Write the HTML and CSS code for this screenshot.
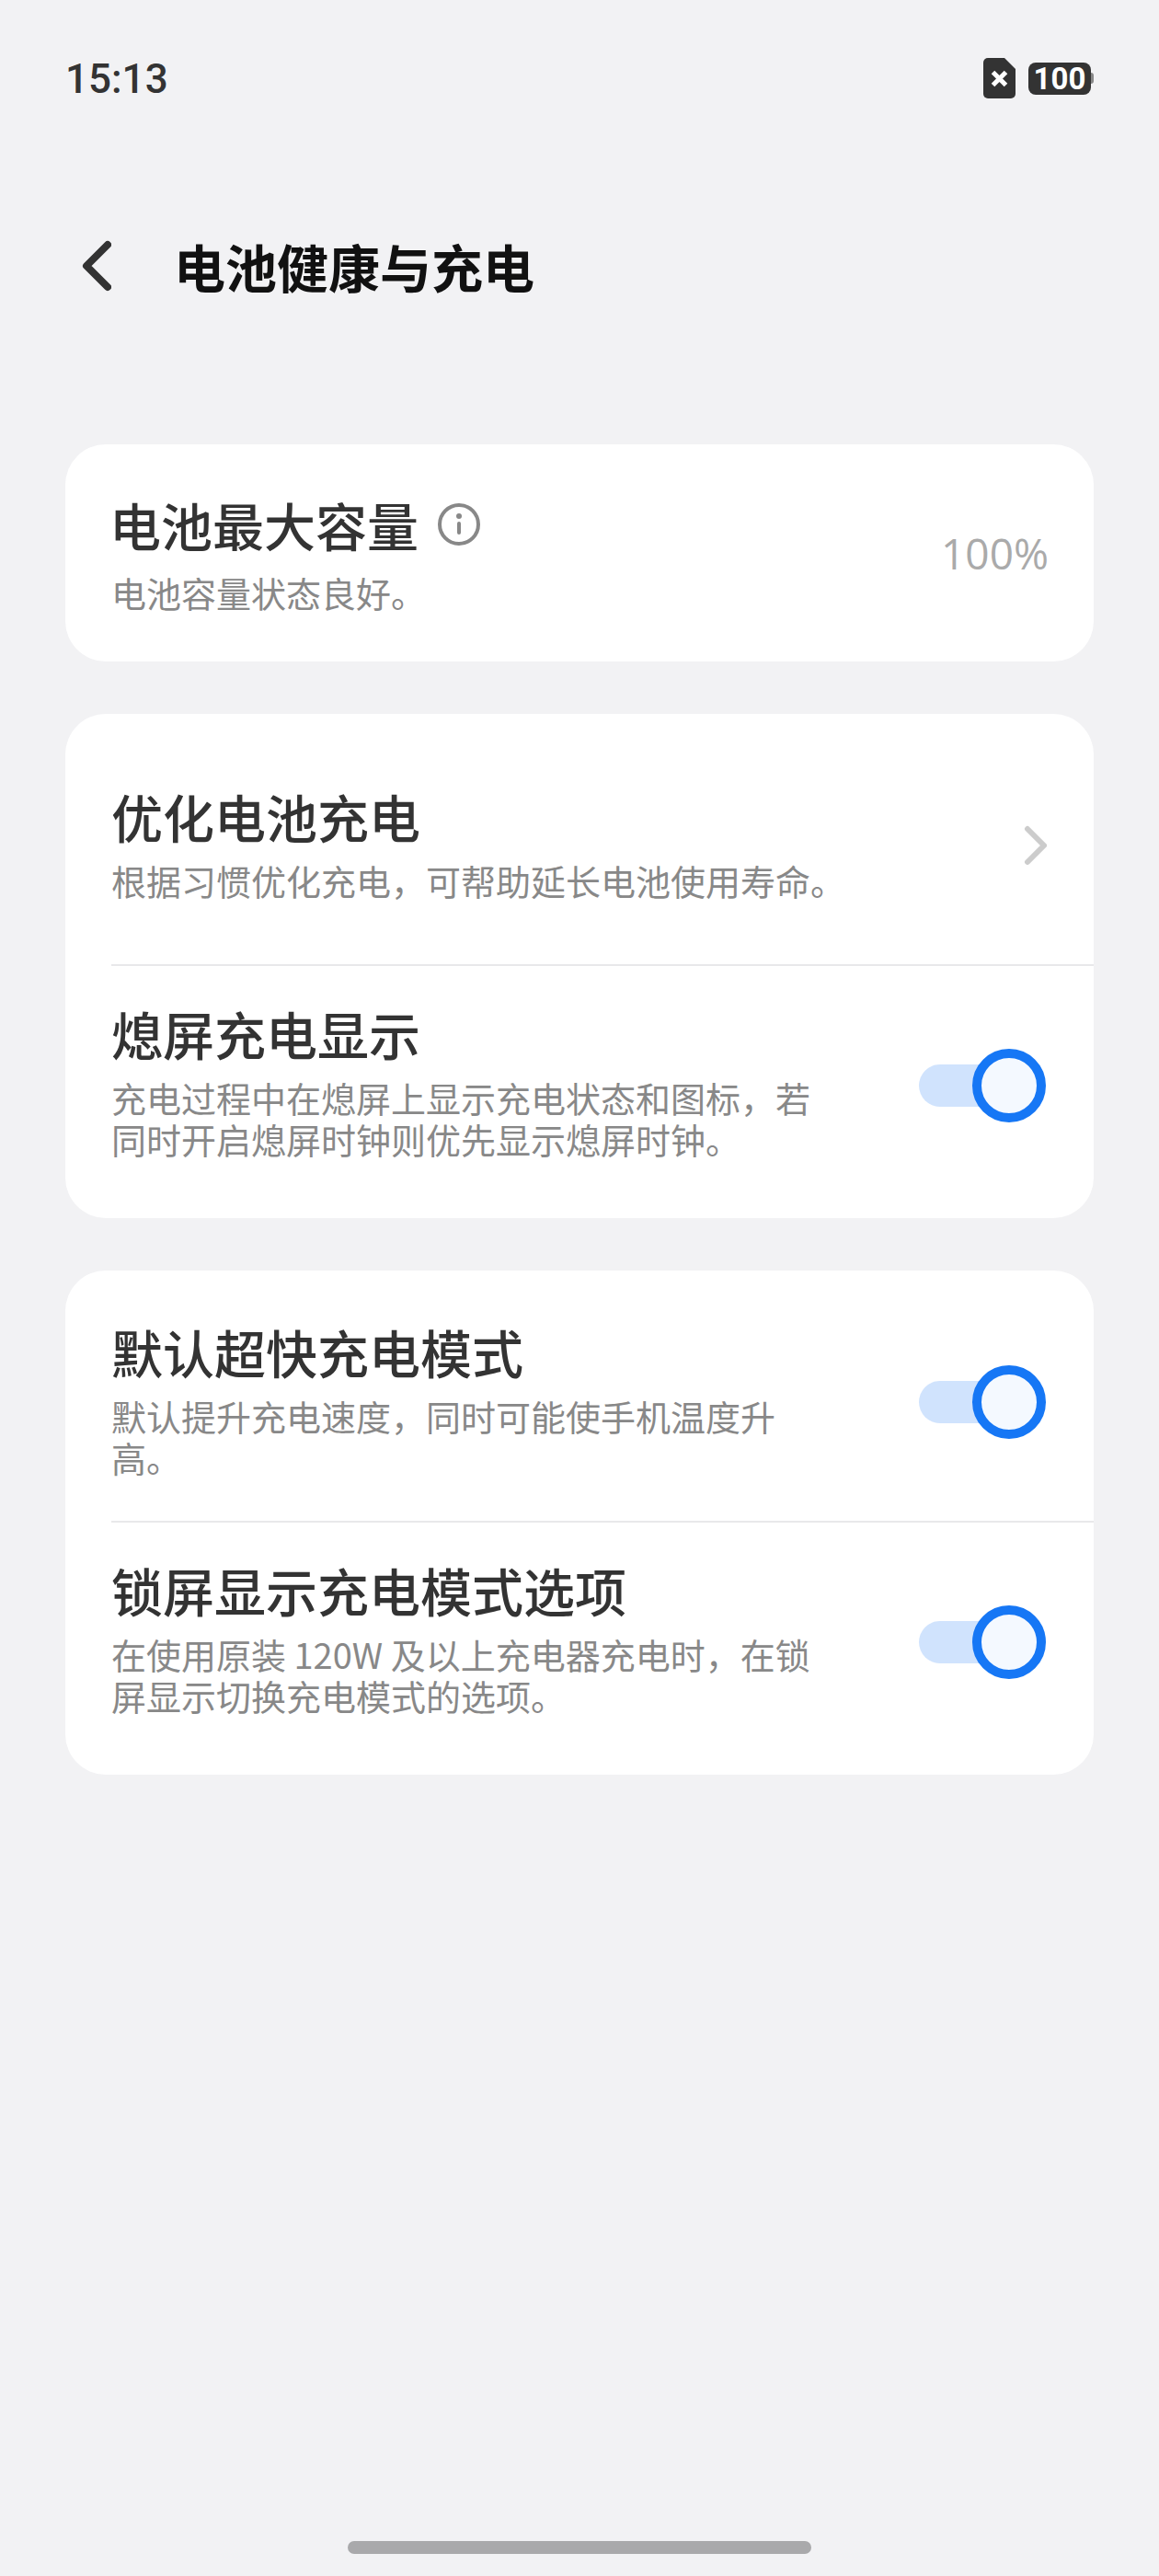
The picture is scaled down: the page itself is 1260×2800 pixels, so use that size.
FILE: index.html
```html
<!DOCTYPE html>
<html lang="zh-CN">
<head>
<meta charset="utf-8">
<title>电池健康与充电</title>
<link rel="stylesheet" href="styles.css">
</head>
<body>
<div class="page">
  <div class="status">
    <span class="time">15:13</span>
    <div class="status-icons">
      <svg class="sim" width="35" height="44" viewBox="0 0 35 44"><path d="M5 0H23L35 12V39a5 5 0 0 1-5 5H5a5 5 0 0 1-5-5V5a5 5 0 0 1 5-5Z" fill="#333"/><path d="M10.500 15.500L24.500 29.500M24.500 15.500L10.500 29.500" stroke="#fff" stroke-width="5" fill="none"/></svg>
      <div class="battery"><span class="battery-body">100</span><span class="battery-cap"></span></div>
    </div>
  </div>
  <div class="header">
    <svg class="back" width="34" height="56" viewBox="0 0 34 56"><path d="M30 5L7 28L30 51" stroke="#333" stroke-width="8" stroke-linecap="round" stroke-linejoin="round" fill="none"/></svg>
    <h1 class="page-title">电池健康与充电</h1>
  </div>
  <main class="cards">
    <section class="card">
      <div class="row row-first">
        <div class="text text-wide">
          <div class="title-line"><span class="title">电池最大容量</span>
            <svg class="info" width="48" height="48" viewBox="0 0 48 48"><circle cx="24" cy="24" r="21" stroke="#888" stroke-width="4" fill="none"/><circle cx="24" cy="15" r="3" fill="#888"/><rect x="22" y="21" width="4" height="14" rx="2" fill="#888"/></svg>
          </div>
          <div class="desc">电池容量状态良好。</div>
        </div>
        <span class="value">100%</span>
      </div>
    </section>
    <section class="card">
      <div class="row row-opt">
        <div class="text">
          <div class="title">优化电池充电</div>
          <div class="desc">根据习惯优化充电，可帮助延长电池使用寿命。</div>
        </div>
        <svg class="chevron" width="28" height="44" viewBox="0 0 28 44"><path d="M7 4L25 22L7 40" stroke="#cccccc" stroke-width="6" stroke-linecap="round" stroke-linejoin="round" fill="none"/></svg>
      </div>
      <div class="divider"></div>
      <div class="row row-two">
        <div class="text text-up">
          <div class="title">熄屏充电显示</div>
          <div class="desc">充电过程中在熄屏上显示充电状态和图标，若<br>同时开启熄屏时钟则优先显示熄屏时钟。</div>
        </div>
        <div class="switch"><span class="knob"></span></div>
      </div>
    </section>
    <section class="card">
      <div class="row row-opt">
        <div class="text">
          <div class="title">默认超快充电模式</div>
          <div class="desc">默认提升充电速度，同时可能使手机温度升<br>高。</div>
        </div>
        <div class="switch"><span class="knob"></span></div>
      </div>
      <div class="divider"></div>
      <div class="row row-two">
        <div class="text text-up">
          <div class="title">锁屏显示充电模式选项</div>
          <div class="desc">在使用原装 120W 及以上充电器充电时，在锁<br>屏显示切换充电模式的选项。</div>
        </div>
        <div class="switch"><span class="knob"></span></div>
      </div>
    </section>
  </main>
  <div class="home-bar"></div>
</div>
</body>
</html>
```
FILE: styles.css
```css
* { box-sizing: border-box; }
html, body { margin: 0; padding: 0; }
body { background: #f2f2f4; font-family: "Noto Sans CJK SC", "Noto Sans", sans-serif; }
.page { width: 1260px; height: 2800px; position: relative; padding: 0 71px; }
.status { height: 170px; display: flex; justify-content: space-between; align-items: flex-start; padding-top: 61px; }
.time { font-family: Roboto, "Noto Sans", sans-serif; font-size: 44px; line-height: 50px; font-weight: 500; color: #333; }
.status-icons { display: flex; align-items: center; gap: 14px; padding-top: 2px; }
.battery { display: flex; align-items: center; }
.battery-body { width: 68px; height: 35px; background: #333; border-radius: 8px; color: #fff; font-family: Roboto, sans-serif; font-weight: 700; font-size: 33px; line-height: 35px; text-align: center; }
.battery-cap { width: 3px; height: 12px; background: #888; border-radius: 0 3px 3px 0; }
.header { display: flex; align-items: center; height: 100px; margin-top: 69px; padding-left: 16px; gap: 68px; }
.page-title { margin: 0; font-size: 56px; font-weight: 700; color: #111; line-height: 70px; }
.cards { display: flex; flex-direction: column; gap: 57px; margin-top: 144px; }
.card { background: #fff; border-radius: 44px; padding-left: 50px; }
.row { display: flex; align-items: center; justify-content: space-between; padding-right: 48px; }
.row-first { height: 236px; padding-right: 49px; }
.row-opt { height: 272px; padding-top: 8px; }
.row-two { height: 274px; padding-bottom: 16px; }
.text { display: flex; flex-direction: column; gap: 14px; }
.text-wide { gap: 18px; }
.text-up { margin-bottom: 8px; }
.title-line { display: flex; align-items: center; gap: 20px; margin-left: -2px; }
.title { font-size: 56px; line-height: 66px; color: #333; font-weight: 500; }
.desc { font-size: 38px; line-height: 45px; color: #888; }
.value { font-family: "Open Sans", sans-serif; font-size: 46px; color: #aaa; }
.divider { height: 2px; background: #e8e8ea; }
.chevron { margin-right: 3px; margin-top: 6px; }
.switch { width: 136px; height: 46px; margin-right: 6px; background: #d0e3fd; border-radius: 23px; position: relative; }
.row-opt .switch { margin-top: 6px; }
.row-two .switch { margin-top: 2px; }
.knob { position: absolute; right: -2px; top: -17px; width: 80px; height: 80px; border-radius: 50%; border: 10px solid #1677f5; background: #f4f9ff; }
.home-bar { position: absolute; left: 378px; top: 2762px; width: 504px; height: 14px; background: #a9a9ab; border-radius: 7px; }
```
